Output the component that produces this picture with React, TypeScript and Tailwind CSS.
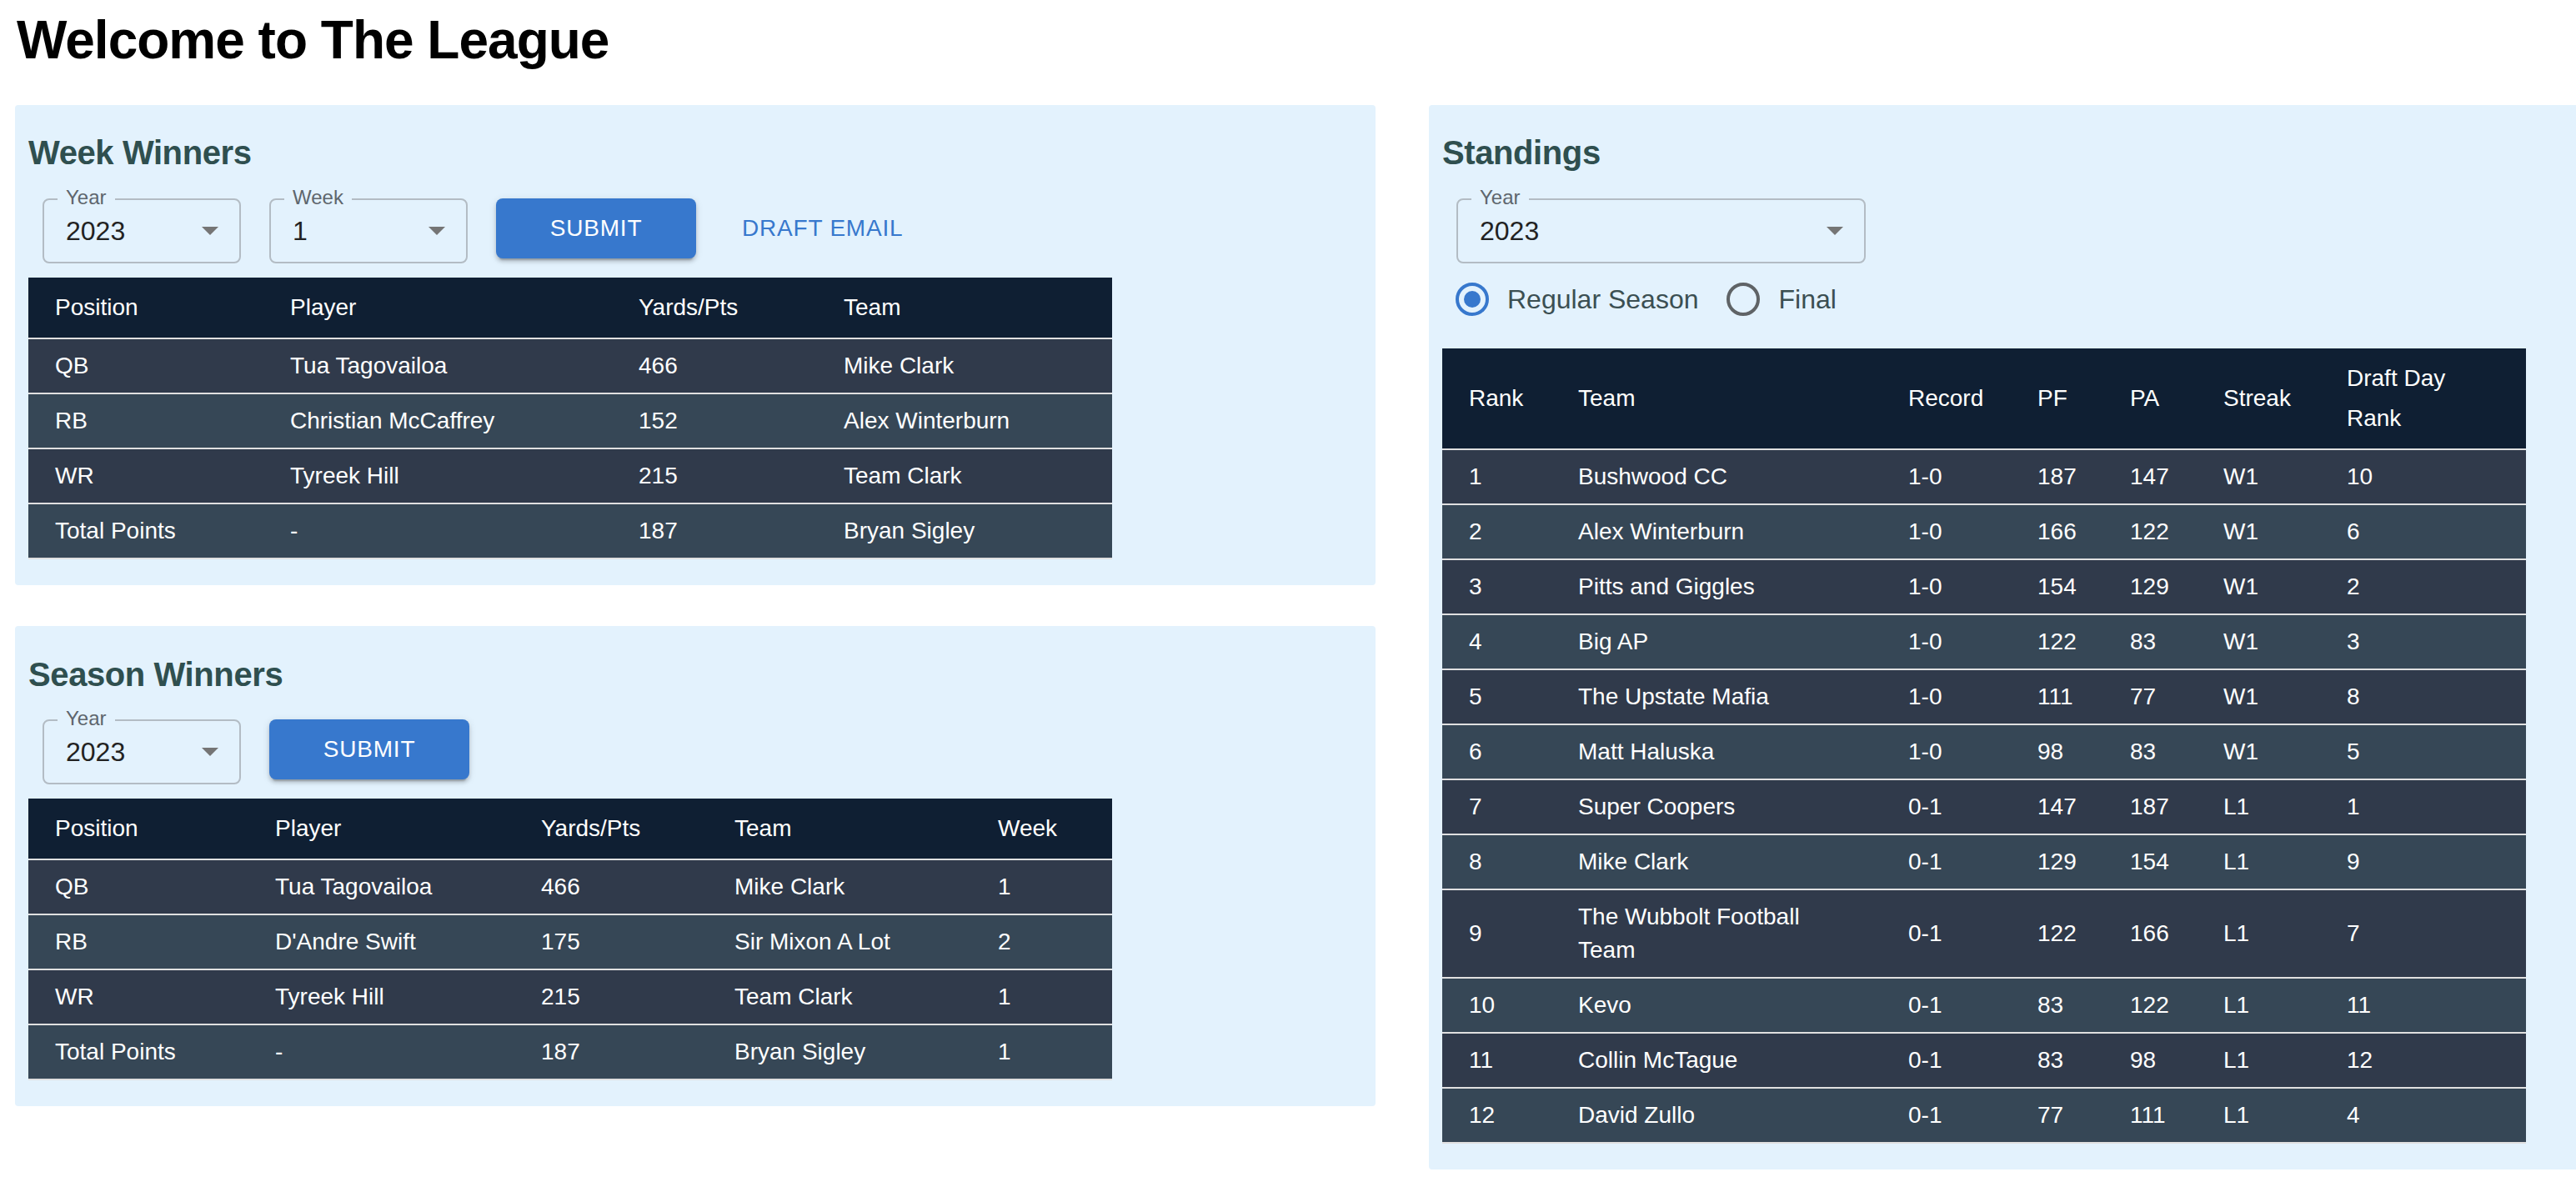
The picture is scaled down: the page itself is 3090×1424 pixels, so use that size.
import React from "react";

const PANEL_BG = "bg-[#e3f2fd]";

function Arrow() {
  return (
    <svg width="20" height="10" viewBox="0 0 20 10" className="shrink-0">
      <path d="M0 0 L10 10 L20 0 Z" fill="#757575" />
    </svg>
  );
}

function SelectBox({ label, value, width }: { label: string; value: string; width: string }) {
  return (
    <div className={`relative flex h-[78px] ${width} items-center justify-between rounded-[8px] border-2 border-[#b3bcc4] pl-[26px] pr-[25px]`}>
      <span className={`absolute left-[16px] top-[-17px] ${PANEL_BG} px-[10px] text-[24px] leading-[28px] text-[#5e666d]`}>
        {label}
      </span>
      <span className="text-[32px] leading-[40px] text-[#222222]">{value}</span>
      <Arrow />
    </div>
  );
}

function SubmitButton() {
  return (
    <button className="h-[72px] w-[240px] rounded-[8px] bg-[#3778cd] text-[28px] font-medium tracking-[0.8px] text-white shadow-[0_6px_2px_-4px_rgba(0,0,0,0.2),0_4px_4px_0_rgba(0,0,0,0.14),0_2px_10px_0_rgba(0,0,0,0.12)]">
      SUBMIT
    </button>
  );
}

function Heading({ children }: { children: React.ReactNode }) {
  return (
    <h2 className="text-[40px] font-bold leading-[64px] tracking-[-0.4px] text-[#2f4f4f]">{children}</h2>
  );
}

function DataTable({
  headers,
  widths,
  rows,
  className,
}: {
  headers: string[];
  widths: number[];
  rows: string[][];
  className: string;
}) {
  return (
    <table className={`w-[1300px] table-fixed border-collapse ${className}`}>
      <colgroup>
        {widths.map((w, i) => (
          <col key={i} style={{ width: w }} />
        ))}
      </colgroup>
      <thead>
        <tr className="bg-[#0f1f33]">
          {headers.map((h) => (
            <th
              key={h}
              className="border-b-2 border-[#e0e0e0] px-[32px] py-[12px] text-left align-middle text-[28px] font-normal leading-[48px] text-white"
            >
              {h}
            </th>
          ))}
        </tr>
      </thead>
      <tbody>
        {rows.map((r, i) => (
          <tr key={i} className={i % 2 === 0 ? "bg-[#303a4b]" : "bg-[#364756]"}>
            {r.map((c, j) => (
              <td
                key={j}
                className="border-b-2 border-[#e0e0e0] px-[32px] py-[12px] align-middle text-[28px] leading-[40px] text-white"
              >
                {c}
              </td>
            ))}
          </tr>
        ))}
      </tbody>
    </table>
  );
}

function RadioChecked() {
  return (
    <svg width="40" height="40" viewBox="0 0 40 40" className="shrink-0">
      <circle cx="20" cy="20" r="18" fill="none" stroke="#3778cd" strokeWidth="4" />
      <circle cx="20" cy="20" r="10" fill="#3778cd" />
    </svg>
  );
}

function RadioUnchecked() {
  return (
    <svg width="40" height="40" viewBox="0 0 40 40" className="shrink-0">
      <circle cx="20" cy="20" r="18" fill="none" stroke="#5f6366" strokeWidth="4" />
    </svg>
  );
}

const weekRows = [
  ["QB", "Tua Tagovailoa", "466", "Mike Clark"],
  ["RB", "Christian McCaffrey", "152", "Alex Winterburn"],
  ["WR", "Tyreek Hill", "215", "Team Clark"],
  ["Total Points", "-", "187", "Bryan Sigley"],
];

const seasonRows = [
  ["QB", "Tua Tagovailoa", "466", "Mike Clark", "1"],
  ["RB", "D'Andre Swift", "175", "Sir Mixon A Lot", "2"],
  ["WR", "Tyreek Hill", "215", "Team Clark", "1"],
  ["Total Points", "-", "187", "Bryan Sigley", "1"],
];

const standingsRows = [
  ["1", "Bushwood CC", "1-0", "187", "147", "W1", "10"],
  ["2", "Alex Winterburn", "1-0", "166", "122", "W1", "6"],
  ["3", "Pitts and Giggles", "1-0", "154", "129", "W1", "2"],
  ["4", "Big AP", "1-0", "122", "83", "W1", "3"],
  ["5", "The Upstate Mafia", "1-0", "111", "77", "W1", "8"],
  ["6", "Matt Haluska", "1-0", "98", "83", "W1", "5"],
  ["7", "Super Coopers", "0-1", "147", "187", "L1", "1"],
  ["8", "Mike Clark", "0-1", "129", "154", "L1", "9"],
  ["9", "The Wubbolt Football Team", "0-1", "122", "166", "L1", "7"],
  ["10", "Kevo", "0-1", "83", "122", "L1", "11"],
  ["11", "Collin McTague", "0-1", "83", "98", "L1", "12"],
  ["12", "David Zullo", "0-1", "77", "111", "L1", "4"],
];

export default function App() {
  return (
    <div className="min-h-screen w-[3090px] bg-white pb-[24px] font-['Liberation_Sans',Arial,Helvetica,sans-serif]">
      <h1 className="pl-[20px] pt-[12px] text-[64px] font-bold leading-[72px] tracking-[-1px] text-black">
        Welcome to The League
      </h1>
      <div className="mt-[42px] flex items-start gap-[64px] pl-[18px]">
        <div className="flex w-[1632px] flex-col gap-[49px]">
          <section className={`rounded-[4px] ${PANEL_BG} px-[16px] pb-[31px] pt-[25px]`}>
            <Heading>Week Winners</Heading>
            <div className="mt-[23px] flex items-start gap-[34px] pl-[17px]">
              <SelectBox label="Year" value="2023" width="w-[238px]" />
              <SelectBox label="Week" value="1" width="w-[238px]" />
              <SubmitButton />
              <button className="flex h-[72px] items-center pl-[21px] text-[28px] font-medium tracking-[0.8px] text-[#3778cd]">
                DRAFT EMAIL
              </button>
            </div>
            <DataTable
              className="mt-[17px]"
              headers={["Position", "Player", "Yards/Pts", "Team"]}
              widths={[282, 418, 246, 354]}
              rows={weekRows}
            />
          </section>
          <section className={`rounded-[4px] ${PANEL_BG} px-[16px] pb-[31px] pt-[26px]`}>
            <Heading>Season Winners</Heading>
            <div className="mt-[22px] flex items-start gap-[34px] pl-[17px]">
              <SelectBox label="Year" value="2023" width="w-[238px]" />
              <SubmitButton />
            </div>
            <DataTable
              className="mt-[17px]"
              headers={["Position", "Player", "Yards/Pts", "Team", "Week"]}
              widths={[264, 319, 232, 316, 169]}
              rows={seasonRows}
            />
          </section>
        </div>
        <div className="flex-1">
          <section className={`rounded-l-[4px] ${PANEL_BG} px-[16px] pb-[31px] pt-[25px]`}>
            <Heading>Standings</Heading>
            <div className="mt-[23px] pl-[17px]">
              <SelectBox label="Year" value="2023" width="w-[491px]" />
            </div>
            <div className="flex h-[86px] items-center pl-[16px] text-[32px] leading-[40px] text-[#3b4f52]">
              <label className="mr-[34px] flex items-center gap-[22px]">
                <RadioChecked />
                <span>Regular Season</span>
              </label>
              <label className="flex items-center gap-[22px]">
                <RadioUnchecked />
                <span>Final</span>
              </label>
            </div>
            <DataTable
              className="mt-[16px]"
              headers={["Rank", "Team", "Record", "PF", "PA", "Streak", "Draft Day Rank"]}
              widths={[131, 396, 155, 111, 112, 148, 247]}
              rows={standingsRows}
            />
          </section>
        </div>
      </div>
    </div>
  );
}
